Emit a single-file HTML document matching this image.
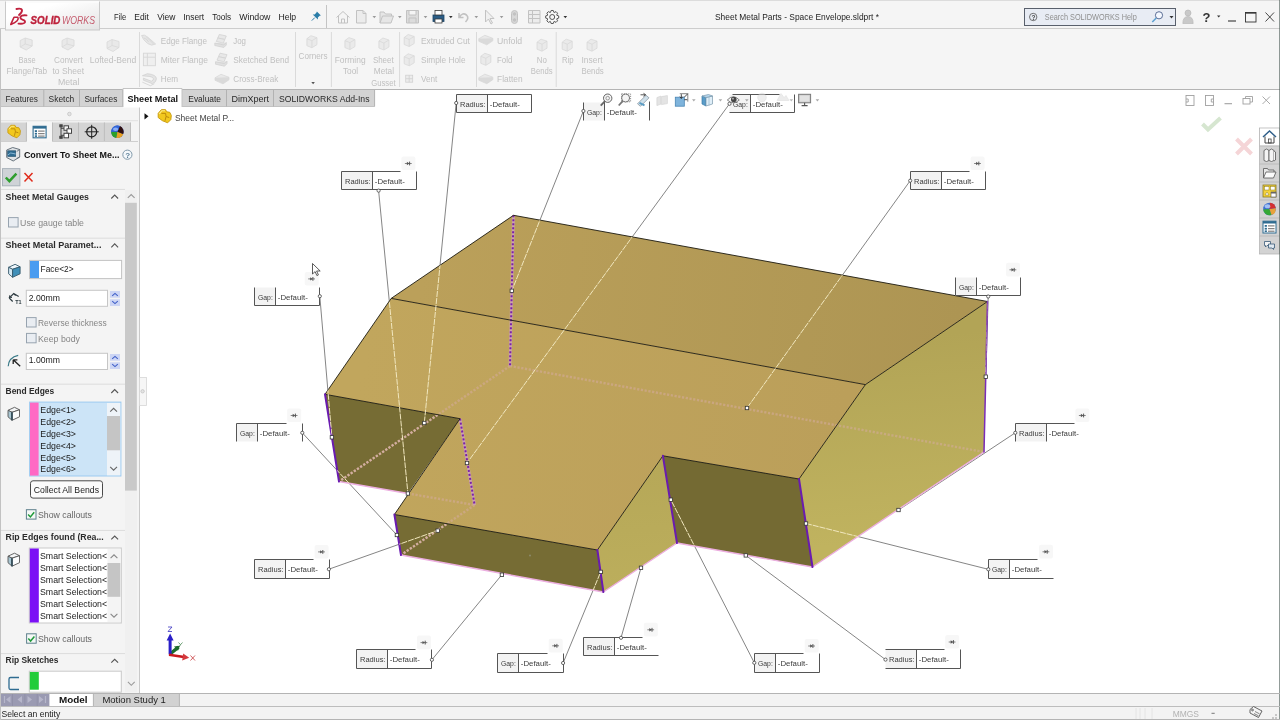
<!DOCTYPE html>
<html><head><meta charset="utf-8"><title>SOLIDWORKS</title>
<style>
*{box-sizing:border-box;margin:0;padding:0}
html,body{width:1280px;height:720px;overflow:hidden;background:#fff;font-family:"Liberation Sans",sans-serif;font-size:9px;color:#222}
.abs{position:absolute}
#titlebar{position:absolute;left:0;top:0;width:1280px;height:29px;background:#f5f5f5;border-top:1px solid #dcdcdc;border-bottom:1px solid #cdcdcd}
#ribbon{position:absolute;left:0;top:29px;width:1280px;height:61px;background:#f5f5f5}
#tabs{position:absolute;left:0;top:90px;width:376px;height:16px}
.tab{position:absolute;top:0;height:16px;background:#d2d2d2;border:1px solid #b9b9b9;border-bottom:none;font-size:9px;line-height:15px;text-align:center;color:#222;white-space:nowrap}
.tab.on{background:#fff;font-weight:bold;border-color:#c8c8c8;height:17px}
#left{position:absolute;left:0;top:106px;width:139.500px;height:587px;background:#f4f4f4;border-right:1px solid #c9c9c9;border-left:1px solid #d8d8d8}
#view{position:absolute;left:139px;top:90px;width:1141px;height:603px;background:#fff}
#right{display:none}
#btabs{position:absolute;left:0;top:693px;width:1280px;height:14px;background:#f3f3f3}
#status{position:absolute;left:0;top:706px;width:1280px;height:14px;background:#f3f3f3}
.t{position:absolute;white-space:nowrap;line-height:1}
.g{color:#b4b4b4}
svg{position:absolute;left:0;top:0;overflow:visible;will-change:transform}
</style></head><body>
<div id="titlebar"></div>
<div id="ribbon"></div>
<div id="view"></div>
<div id="left"></div>
<div id="right"></div>
<div id="tabs"></div>
<div id="btabs"></div>
<div id="status"></div>
<!--MODEL-->
<svg width="1280" height="720" viewBox="0 0 1280 720" id="model">
<defs>
<linearGradient id="gt" gradientUnits="userSpaceOnUse" x1="420" y1="280" x2="960" y2="330"><stop offset="0" stop-color="#bba05a"/><stop offset="1" stop-color="#ad9553"/></linearGradient>
<linearGradient id="gf" gradientUnits="userSpaceOnUse" x1="360" y1="380" x2="840" y2="440"><stop offset="0" stop-color="#c1a65d"/><stop offset="1" stop-color="#bb9f5a"/></linearGradient>
<linearGradient id="gr" gradientUnits="userSpaceOnUse" x1="880" y1="340" x2="900" y2="540"><stop offset="0" stop-color="#b2a456"/><stop offset="1" stop-color="#c0b35f"/></linearGradient>
<linearGradient id="gs" gradientUnits="userSpaceOnUse" x1="630" y1="470" x2="640" y2="590"><stop offset="0" stop-color="#b6a858"/><stop offset="1" stop-color="#bcae5c"/></linearGradient>
<clipPath id="msil"><polygon points="513.5,215.3 987.5,301.5 984.0,452.0 812.5,567.0 677.0,543.0 603.4,592.0 401.0,555.0 394.4,514.5 408.0,493.5 339.0,481.5 325.0,394.3 391.2,298.4"/></clipPath>
</defs>
<g stroke="#666" stroke-width="0.8" fill="none">
<line x1="456.2" y1="103.0" x2="424.3" y2="423.0"/>
<line x1="583.4" y1="111.0" x2="511.8" y2="290.8"/>
<line x1="729.5" y1="103.8" x2="467.0" y2="463.0"/>
<line x1="378.6" y1="190.6" x2="407.9" y2="493.5"/>
<line x1="910.2" y1="180.7" x2="747.0" y2="408.0"/>
<line x1="319.8" y1="296.2" x2="331.9" y2="437.3"/>
<line x1="988.2" y1="296.5" x2="985.8" y2="376.7"/>
<line x1="302.3" y1="432.8" x2="396.9" y2="535.0"/>
<line x1="1015.3" y1="432.8" x2="898.5" y2="510.0"/>
<line x1="328.9" y1="569.2" x2="437.7" y2="530.6"/>
<line x1="988.3" y1="569.3" x2="806.0" y2="523.5"/>
<line x1="431.9" y1="659.8" x2="501.9" y2="574.7"/>
<line x1="563.1" y1="663.0" x2="600.7" y2="571.9"/>
<line x1="621.0" y1="637.8" x2="641.0" y2="567.8"/>
<line x1="754.3" y1="662.8" x2="670.8" y2="499.7"/>
<line x1="885.5" y1="659.6" x2="745.8" y2="555.4"/>
</g>
<polygon points="513.5,215.3 987.5,301.5 865.4,384.6 391.2,298.4" fill="url(#gt)"/>
<polygon points="391.2,298.4 865.4,384.6 799.0,479.0 662.9,455.8 597.4,550.0 394.4,514.5 460.0,418.7 325.0,394.3" fill="url(#gf)"/>
<polygon points="799.0,479.0 865.4,384.6 987.5,301.5 984.0,452.0 812.5,567.0" fill="url(#gr)"/>
<polygon points="597.4,550.0 662.9,455.8 677.0,543.0 603.4,592.0" fill="url(#gs)"/>
<polygon points="325.0,394.3 460.0,418.7 408.0,493.5 339.0,481.5" fill="#766c34"/>
<polygon points="394.4,514.5 597.4,550.0 603.4,592.0 401.0,555.0" fill="#766c34"/>
<polygon points="662.9,455.8 799.0,479.0 812.5,567.0 677.0,543.0" fill="#746a33"/>
<clipPath id="dk"><polygon points="325.0,394.3 460.0,418.7 408.0,493.5 339.0,481.5"/><polygon points="394.4,514.5 597.4,550.0 603.4,592.0 401.0,555.0"/><polygon points="662.9,455.8 799.0,479.0 812.5,567.0 677.0,543.0"/></clipPath>
<g stroke="#d6ab9f" stroke-width="2.4" stroke-dasharray="2.2 1.6" fill="none" opacity="0.55">
<line x1="510.0" y1="366.0" x2="984.0" y2="452.0" />
<line x1="510.0" y1="366.0" x2="339.0" y2="481.5" />
<line x1="408.0" y1="493.5" x2="474.6" y2="505.0" />
<line x1="474.6" y1="505.0" x2="401.0" y2="555.0" />
</g>
<g stroke="#d8b2a6" stroke-width="2.2" stroke-dasharray="2.2 1.6" fill="none" opacity="0.9" clip-path="url(#dk)">
<line x1="510.0" y1="366.0" x2="984.0" y2="452.0" />
<line x1="510.0" y1="366.0" x2="339.0" y2="481.5" />
<line x1="408.0" y1="493.5" x2="474.6" y2="505.0" />
<line x1="474.6" y1="505.0" x2="401.0" y2="555.0" />
</g>
<g stroke="#cfa2b6" stroke-width="2.8" fill="none" opacity="0.9">
<line x1="513.5" y1="215.3" x2="510.0" y2="366.0" />
<line x1="460.0" y1="418.7" x2="474.6" y2="505.0" />
</g>
<g stroke="#7a22a8" stroke-width="2" stroke-dasharray="2 2" fill="none">
<line x1="513.5" y1="215.3" x2="510.0" y2="366.0" />
<line x1="460.0" y1="418.7" x2="474.6" y2="505.0" />
</g>
<g stroke="#ecaee0" stroke-width="1.4" fill="none" stroke-linecap="round">
<line x1="339.0" y1="481.5" x2="408.0" y2="493.5" />
<line x1="401.0" y1="555.0" x2="603.4" y2="592.0" />
<line x1="603.4" y1="592.0" x2="677.0" y2="543.0" />
<line x1="677.0" y1="543.0" x2="812.5" y2="567.0" />
<line x1="812.5" y1="567.0" x2="984.0" y2="452.0" />
</g>
<g stroke="#1c1a10" stroke-width="0.9" fill="none">
<line x1="513.5" y1="215.3" x2="987.5" y2="301.5" />
<line x1="987.5" y1="301.5" x2="865.4" y2="384.6" />
<line x1="865.4" y1="384.6" x2="391.2" y2="298.4" />
<line x1="391.2" y1="298.4" x2="513.5" y2="215.3" />
<line x1="391.2" y1="298.4" x2="325.0" y2="394.3" />
<line x1="325.0" y1="394.3" x2="460.0" y2="418.7" />
<line x1="460.0" y1="418.7" x2="394.4" y2="514.5" />
<line x1="394.4" y1="514.5" x2="597.4" y2="550.0" />
<line x1="597.4" y1="550.0" x2="662.9" y2="455.8" />
<line x1="662.9" y1="455.8" x2="799.0" y2="479.0" />
<line x1="799.0" y1="479.0" x2="865.4" y2="384.6" />
</g>
<g stroke="#6a1bb0" stroke-width="2" fill="none" stroke-linecap="round">
<line x1="325.0" y1="394.3" x2="339.0" y2="481.5" />
<line x1="394.4" y1="514.5" x2="401.0" y2="555.0" />
<line x1="597.4" y1="550.0" x2="603.4" y2="592.0" />
<line x1="662.9" y1="455.8" x2="677.0" y2="543.0" />
<line x1="799.0" y1="479.0" x2="812.5" y2="567.0" />
<line x1="987.5" y1="301.5" x2="984.0" y2="452.0" stroke-width="1.5" stroke="#7a2cb8"/>
</g>
<g stroke="#f1e7bf" stroke-width="1" fill="none" clip-path="url(#msil)" stroke-dasharray="6 1">
<line x1="456.2" y1="103.0" x2="424.3" y2="423.0"/>
<line x1="583.4" y1="111.0" x2="511.8" y2="290.8"/>
<line x1="729.5" y1="103.8" x2="467.0" y2="463.0"/>
<line x1="378.6" y1="190.6" x2="407.9" y2="493.5"/>
<line x1="910.2" y1="180.7" x2="747.0" y2="408.0"/>
<line x1="319.8" y1="296.2" x2="331.9" y2="437.3"/>
<line x1="988.2" y1="296.5" x2="985.8" y2="376.7"/>
<line x1="302.3" y1="432.8" x2="396.9" y2="535.0"/>
<line x1="1015.3" y1="432.8" x2="898.5" y2="510.0"/>
<line x1="328.9" y1="569.2" x2="437.7" y2="530.6"/>
<line x1="988.3" y1="569.3" x2="806.0" y2="523.5"/>
<line x1="431.9" y1="659.8" x2="501.9" y2="574.7"/>
<line x1="563.1" y1="663.0" x2="600.7" y2="571.9"/>
<line x1="621.0" y1="637.8" x2="641.0" y2="567.8"/>
<line x1="754.3" y1="662.8" x2="670.8" y2="499.7"/>
<line x1="885.5" y1="659.6" x2="745.8" y2="555.4"/>
</g>
<g fill="#fff" stroke="#333" stroke-width="0.8">
<rect x="422.6" y="421.3" width="3.4" height="3.4"/>
<rect x="510.1" y="289.1" width="3.4" height="3.4"/>
<rect x="465.3" y="461.3" width="3.4" height="3.4"/>
<rect x="406.2" y="491.8" width="3.4" height="3.4"/>
<rect x="745.3" y="406.3" width="3.4" height="3.4"/>
<rect x="330.2" y="435.6" width="3.4" height="3.4"/>
<rect x="984.1" y="375.0" width="3.4" height="3.4"/>
<rect x="395.2" y="533.3" width="3.4" height="3.4"/>
<rect x="896.8" y="508.3" width="3.4" height="3.4"/>
<rect x="436.0" y="528.9" width="3.4" height="3.4"/>
<rect x="804.3" y="521.8" width="3.4" height="3.4"/>
<rect x="500.2" y="573.0" width="3.4" height="3.4"/>
<rect x="599.0" y="570.2" width="3.4" height="3.4"/>
<rect x="639.3" y="566.1" width="3.4" height="3.4"/>
<rect x="669.1" y="498.0" width="3.4" height="3.4"/>
<rect x="744.1" y="553.7" width="3.4" height="3.4"/>
</g>
<circle cx="530" cy="555.5" r="1" fill="#8c8a6a"/>
</svg>
<!--/MODEL-->
<!--CALLOUTS-->
<svg width="1280" height="720" viewBox="0 0 1280 720" id="callouts" font-family="Liberation Sans, sans-serif" font-size="8">
<rect x="456.5" y="94.5" width="75.0" height="18.0" fill="#fff"/>
<rect x="456.5" y="94.5" width="31.0" height="18.0" fill="#f3f3f3"/>
<path d="M456.5 94.5V112.5M456.5 94.5H531.5M531.5 94.5V112.5M456.5 112.5H531.5M487.5 94.5V112.5" stroke="#555" stroke-width="1" fill="none"/>
<text x="460.0" y="107.0" fill="#3a3a3a" textLength="25.5" lengthAdjust="spacingAndGlyphs">Radius:</text>
<text x="489.8" y="107.0" fill="#3a3a3a" textLength="30" lengthAdjust="spacingAndGlyphs">-Default-</text>
<circle cx="456.2" cy="103.0" r="1.6" fill="#fff" stroke="#444" stroke-width="0.8"/>
<rect x="583.5" y="102.5" width="66.0" height="18.0" fill="#fff"/>
<rect x="583.5" y="102.5" width="21.0" height="18.0" fill="#f3f3f3"/>
<path d="M583.5 102.5V120.5M649.5 101.5V120.5M604.5 95.5V120.5" stroke="#555" stroke-width="1" fill="none"/>
<text x="587.0" y="115.0" fill="#3a3a3a" textLength="14.8" lengthAdjust="spacingAndGlyphs">Gap:</text>
<text x="606.8" y="115.0" fill="#3a3a3a" textLength="30" lengthAdjust="spacingAndGlyphs">-Default-</text>
<circle cx="583.4" cy="111.0" r="1.6" fill="#fff" stroke="#444" stroke-width="0.8"/>
<rect x="729.5" y="94.5" width="65.0" height="18.0" fill="#fff"/>
<rect x="729.5" y="94.5" width="21.0" height="18.0" fill="#f3f3f3"/>
<path d="M732.5 94.5H779.5M794.5 94.5V112.5M729.5 112.5H794.5M750.5 94.5V112.5" stroke="#555" stroke-width="1" fill="none"/>
<text x="733.0" y="107.0" fill="#3a3a3a" textLength="14.8" lengthAdjust="spacingAndGlyphs">Gap:</text>
<text x="752.8" y="107.0" fill="#3a3a3a" textLength="30" lengthAdjust="spacingAndGlyphs">-Default-</text>
<circle cx="729.5" cy="103.8" r="1.6" fill="#fff" stroke="#444" stroke-width="0.8"/>
<rect x="341.5" y="171.5" width="75.0" height="18.0" fill="#fff"/>
<rect x="341.5" y="171.5" width="31.0" height="18.0" fill="#f3f3f3"/>
<path d="M341.5 171.5V189.5M341.5 171.5H400.5M416.5 171.5V189.5M341.5 189.5H416.5M372.5 171.5V189.5" stroke="#555" stroke-width="1" fill="none"/>
<text x="345.0" y="184.0" fill="#3a3a3a" textLength="25.5" lengthAdjust="spacingAndGlyphs">Radius:</text>
<text x="374.8" y="184.0" fill="#3a3a3a" textLength="30" lengthAdjust="spacingAndGlyphs">-Default-</text>
<rect x="401.4" y="156.5" width="14" height="13.6" rx="2" fill="#f7f7f7"/>
<path d="M404.9 163.5h6.8" stroke="#666" stroke-width="0.8" fill="none"/><path d="M409.6 161.6v3.8" stroke="#555" stroke-width="1" fill="none"/><path d="M409.3 163.5l-2.4 -1.7v3.4z" fill="#555"/>
<circle cx="378.6" cy="190.6" r="1.6" fill="#fff" stroke="#444" stroke-width="0.8"/>
<rect x="910.5" y="171.5" width="75.0" height="18.0" fill="#fff"/>
<rect x="910.5" y="171.5" width="31.0" height="18.0" fill="#f3f3f3"/>
<path d="M910.5 171.5V189.5M910.5 171.5H969.5M985.5 171.5V189.5M910.5 189.5H985.5M941.5 171.5V189.5" stroke="#555" stroke-width="1" fill="none"/>
<text x="914.0" y="184.0" fill="#3a3a3a" textLength="25.5" lengthAdjust="spacingAndGlyphs">Radius:</text>
<text x="943.8" y="184.0" fill="#3a3a3a" textLength="30" lengthAdjust="spacingAndGlyphs">-Default-</text>
<rect x="970.6" y="156.5" width="14" height="13.6" rx="2" fill="#f7f7f7"/>
<path d="M974.1 163.5h6.8" stroke="#666" stroke-width="0.8" fill="none"/><path d="M978.8 161.6v3.8" stroke="#555" stroke-width="1" fill="none"/><path d="M978.5 163.5l-2.4 -1.7v3.4z" fill="#555"/>
<circle cx="910.2" cy="180.7" r="1.6" fill="#fff" stroke="#444" stroke-width="0.8"/>
<rect x="254.5" y="287.5" width="65.0" height="18.0" fill="#fff"/>
<rect x="254.5" y="287.5" width="21.0" height="18.0" fill="#f3f3f3"/>
<path d="M254.5 287.5V305.5M319.5 287.5V305.5M254.5 305.5H319.5M275.5 287.5V305.5" stroke="#555" stroke-width="1" fill="none"/>
<text x="258.0" y="300.0" fill="#3a3a3a" textLength="14.8" lengthAdjust="spacingAndGlyphs">Gap:</text>
<text x="277.8" y="300.0" fill="#3a3a3a" textLength="30" lengthAdjust="spacingAndGlyphs">-Default-</text>
<rect x="304.7" y="271.9" width="14" height="13.6" rx="2" fill="#f7f7f7"/>
<path d="M308.2 278.9h6.8" stroke="#666" stroke-width="0.8" fill="none"/><path d="M312.9 277.0v3.8" stroke="#555" stroke-width="1" fill="none"/><path d="M312.6 278.9l-2.4 -1.7v3.4z" fill="#555"/>
<circle cx="319.8" cy="296.2" r="1.6" fill="#fff" stroke="#444" stroke-width="0.8"/>
<rect x="955.5" y="277.5" width="65.0" height="18.0" fill="#fff"/>
<rect x="955.5" y="277.5" width="21.0" height="18.0" fill="#f3f3f3"/>
<path d="M955.5 277.5V295.5M1020.5 277.5V295.5M955.5 295.5H1020.5M976.5 277.5V295.5" stroke="#555" stroke-width="1" fill="none"/>
<text x="959.0" y="290.0" fill="#3a3a3a" textLength="14.8" lengthAdjust="spacingAndGlyphs">Gap:</text>
<text x="978.8" y="290.0" fill="#3a3a3a" textLength="30" lengthAdjust="spacingAndGlyphs">-Default-</text>
<rect x="1006.0" y="262.8" width="14" height="13.6" rx="2" fill="#f7f7f7"/>
<path d="M1009.5 269.8h6.8" stroke="#666" stroke-width="0.8" fill="none"/><path d="M1014.2 267.9v3.8" stroke="#555" stroke-width="1" fill="none"/><path d="M1013.9 269.8l-2.4 -1.7v3.4z" fill="#555"/>
<circle cx="988.2" cy="296.5" r="1.6" fill="#fff" stroke="#444" stroke-width="0.8"/>
<rect x="236.5" y="423.5" width="66.0" height="18.0" fill="#fff"/>
<rect x="236.5" y="423.5" width="21.0" height="18.0" fill="#f3f3f3"/>
<path d="M236.5 423.5V441.5M236.5 423.5H286.5M302.5 423.5V441.5M257.5 423.5V441.5" stroke="#555" stroke-width="1" fill="none"/>
<text x="240.0" y="436.0" fill="#3a3a3a" textLength="14.8" lengthAdjust="spacingAndGlyphs">Gap:</text>
<text x="259.8" y="436.0" fill="#3a3a3a" textLength="30" lengthAdjust="spacingAndGlyphs">-Default-</text>
<rect x="287.2" y="408.5" width="14" height="13.6" rx="2" fill="#f7f7f7"/>
<path d="M290.7 415.5h6.8" stroke="#666" stroke-width="0.8" fill="none"/><path d="M295.4 413.6v3.8" stroke="#555" stroke-width="1" fill="none"/><path d="M295.1 415.5l-2.4 -1.7v3.4z" fill="#555"/>
<circle cx="302.3" cy="432.8" r="1.6" fill="#fff" stroke="#444" stroke-width="0.8"/>
<rect x="1015.5" y="423.5" width="75.0" height="18.0" fill="#fff"/>
<rect x="1015.5" y="423.5" width="31.0" height="18.0" fill="#f3f3f3"/>
<path d="M1015.5 423.5V441.5M1015.5 423.5H1074.5M1046.5 423.5V441.5" stroke="#555" stroke-width="1" fill="none"/>
<text x="1019.0" y="436.0" fill="#3a3a3a" textLength="25.5" lengthAdjust="spacingAndGlyphs">Radius:</text>
<text x="1048.8" y="436.0" fill="#3a3a3a" textLength="30" lengthAdjust="spacingAndGlyphs">-Default-</text>
<rect x="1075.4" y="408.5" width="14" height="13.6" rx="2" fill="#f7f7f7"/>
<path d="M1078.9 415.5h6.8" stroke="#666" stroke-width="0.8" fill="none"/><path d="M1083.6 413.6v3.8" stroke="#555" stroke-width="1" fill="none"/><path d="M1083.3 415.5l-2.4 -1.7v3.4z" fill="#555"/>
<circle cx="1015.3" cy="432.8" r="1.6" fill="#fff" stroke="#444" stroke-width="0.8"/>
<rect x="254.5" y="559.5" width="75.0" height="19.0" fill="#fff"/>
<rect x="254.5" y="559.5" width="31.0" height="19.0" fill="#f3f3f3"/>
<path d="M254.5 559.5V578.5M254.5 559.5H313.5M329.5 559.5V578.5M254.5 578.5H329.5M285.5 559.5V578.5" stroke="#555" stroke-width="1" fill="none"/>
<text x="258.0" y="572.0" fill="#3a3a3a" textLength="25.5" lengthAdjust="spacingAndGlyphs">Radius:</text>
<text x="287.8" y="572.0" fill="#3a3a3a" textLength="30" lengthAdjust="spacingAndGlyphs">-Default-</text>
<rect x="314.6" y="544.9" width="14" height="13.6" rx="2" fill="#f7f7f7"/>
<path d="M318.1 551.9h6.8" stroke="#666" stroke-width="0.8" fill="none"/><path d="M322.8 550.0v3.8" stroke="#555" stroke-width="1" fill="none"/><path d="M322.5 551.9l-2.4 -1.7v3.4z" fill="#555"/>
<circle cx="328.9" cy="569.2" r="1.6" fill="#fff" stroke="#444" stroke-width="0.8"/>
<rect x="988.5" y="559.5" width="65.0" height="19.0" fill="#fff"/>
<rect x="988.5" y="559.5" width="21.0" height="19.0" fill="#f3f3f3"/>
<path d="M988.5 559.5V578.5M988.5 559.5H1037.5M988.5 578.5H1053.5M1009.5 559.5V578.5" stroke="#555" stroke-width="1" fill="none"/>
<text x="992.0" y="572.0" fill="#3a3a3a" textLength="14.8" lengthAdjust="spacingAndGlyphs">Gap:</text>
<text x="1011.8" y="572.0" fill="#3a3a3a" textLength="30" lengthAdjust="spacingAndGlyphs">-Default-</text>
<rect x="1039.0" y="544.8" width="14" height="13.6" rx="2" fill="#f7f7f7"/>
<path d="M1042.5 551.8h6.8" stroke="#666" stroke-width="0.8" fill="none"/><path d="M1047.2 549.9v3.8" stroke="#555" stroke-width="1" fill="none"/><path d="M1046.9 551.8l-2.4 -1.7v3.4z" fill="#555"/>
<circle cx="988.3" cy="569.3" r="1.6" fill="#fff" stroke="#444" stroke-width="0.8"/>
<rect x="356.5" y="649.5" width="75.0" height="19.0" fill="#fff"/>
<rect x="356.5" y="649.5" width="31.0" height="19.0" fill="#f3f3f3"/>
<path d="M356.5 649.5V668.5M356.5 649.5H415.5M431.5 649.5V668.5M356.5 668.5H431.5M387.5 649.5V668.5" stroke="#555" stroke-width="1" fill="none"/>
<text x="360.0" y="662.0" fill="#3a3a3a" textLength="25.5" lengthAdjust="spacingAndGlyphs">Radius:</text>
<text x="389.8" y="662.0" fill="#3a3a3a" textLength="30" lengthAdjust="spacingAndGlyphs">-Default-</text>
<rect x="417.0" y="635.6" width="14" height="13.6" rx="2" fill="#f7f7f7"/>
<path d="M420.5 642.6h6.8" stroke="#666" stroke-width="0.8" fill="none"/><path d="M425.2 640.7v3.8" stroke="#555" stroke-width="1" fill="none"/><path d="M424.9 642.6l-2.4 -1.7v3.4z" fill="#555"/>
<circle cx="431.9" cy="659.8" r="1.6" fill="#fff" stroke="#444" stroke-width="0.8"/>
<rect x="497.5" y="653.5" width="66.0" height="19.0" fill="#fff"/>
<rect x="497.5" y="653.5" width="21.0" height="19.0" fill="#f3f3f3"/>
<path d="M497.5 653.5V672.5M497.5 653.5H547.5M563.5 653.5V672.5M497.5 672.5H563.5M518.5 653.5V672.5" stroke="#555" stroke-width="1" fill="none"/>
<text x="501.0" y="666.0" fill="#3a3a3a" textLength="14.8" lengthAdjust="spacingAndGlyphs">Gap:</text>
<text x="520.8" y="666.0" fill="#3a3a3a" textLength="30" lengthAdjust="spacingAndGlyphs">-Default-</text>
<rect x="548.7" y="638.8" width="14" height="13.6" rx="2" fill="#f7f7f7"/>
<path d="M552.2 645.8h6.8" stroke="#666" stroke-width="0.8" fill="none"/><path d="M556.9 643.9v3.8" stroke="#555" stroke-width="1" fill="none"/><path d="M556.6 645.8l-2.4 -1.7v3.4z" fill="#555"/>
<circle cx="563.1" cy="663.0" r="1.6" fill="#fff" stroke="#444" stroke-width="0.8"/>
<rect x="583.5" y="637.5" width="75.0" height="18.0" fill="#fff"/>
<rect x="583.5" y="637.5" width="31.0" height="18.0" fill="#f3f3f3"/>
<path d="M583.5 637.5V655.5M583.5 637.5H642.5M583.5 655.5H658.5M614.5 637.5V655.5" stroke="#555" stroke-width="1" fill="none"/>
<text x="587.0" y="650.0" fill="#3a3a3a" textLength="25.5" lengthAdjust="spacingAndGlyphs">Radius:</text>
<text x="616.8" y="650.0" fill="#3a3a3a" textLength="30" lengthAdjust="spacingAndGlyphs">-Default-</text>
<rect x="643.8" y="622.8" width="14" height="13.6" rx="2" fill="#f7f7f7"/>
<path d="M647.3 629.8h6.8" stroke="#666" stroke-width="0.8" fill="none"/><path d="M652.0 627.9v3.8" stroke="#555" stroke-width="1" fill="none"/><path d="M651.7 629.8l-2.4 -1.7v3.4z" fill="#555"/>
<circle cx="621.0" cy="637.8" r="1.6" fill="#fff" stroke="#444" stroke-width="0.8"/>
<rect x="754.5" y="653.5" width="65.0" height="19.0" fill="#fff"/>
<rect x="754.5" y="653.5" width="21.0" height="19.0" fill="#f3f3f3"/>
<path d="M754.5 653.5V672.5M754.5 653.5H803.5M819.5 653.5V672.5M754.5 672.5H819.5M775.5 653.5V672.5" stroke="#555" stroke-width="1" fill="none"/>
<text x="758.0" y="666.0" fill="#3a3a3a" textLength="14.8" lengthAdjust="spacingAndGlyphs">Gap:</text>
<text x="777.8" y="666.0" fill="#3a3a3a" textLength="30" lengthAdjust="spacingAndGlyphs">-Default-</text>
<rect x="804.7" y="639.0" width="14" height="13.6" rx="2" fill="#f7f7f7"/>
<path d="M808.2 646.0h6.8" stroke="#666" stroke-width="0.8" fill="none"/><path d="M812.9 644.1v3.8" stroke="#555" stroke-width="1" fill="none"/><path d="M812.6 646.0l-2.4 -1.7v3.4z" fill="#555"/>
<circle cx="754.3" cy="662.8" r="1.6" fill="#fff" stroke="#444" stroke-width="0.8"/>
<rect x="885.5" y="649.5" width="75.0" height="19.0" fill="#fff"/>
<rect x="885.5" y="649.5" width="31.0" height="19.0" fill="#f3f3f3"/>
<path d="M885.5 649.5H944.5M960.5 649.5V668.5M885.5 668.5H960.5M916.5 649.5V668.5" stroke="#555" stroke-width="1" fill="none"/>
<text x="889.0" y="662.0" fill="#3a3a3a" textLength="25.5" lengthAdjust="spacingAndGlyphs">Radius:</text>
<text x="918.8" y="662.0" fill="#3a3a3a" textLength="30" lengthAdjust="spacingAndGlyphs">-Default-</text>
<rect x="945.2" y="635.0" width="14" height="13.6" rx="2" fill="#f7f7f7"/>
<path d="M948.7 642.0h6.8" stroke="#666" stroke-width="0.8" fill="none"/><path d="M953.4 640.1v3.8" stroke="#555" stroke-width="1" fill="none"/><path d="M953.1 642.0l-2.4 -1.7v3.4z" fill="#555"/>
<circle cx="885.5" cy="659.6" r="1.6" fill="#fff" stroke="#444" stroke-width="0.8"/>
</svg>
<!--/CALLOUTS-->
<!--TITLE-->
<svg width="1280" height="30" viewBox="0 0 1280 30" font-family="Liberation Sans, sans-serif">
<defs><linearGradient id="lg" x1="0" y1="0" x2="1" y2="1"><stop offset="0.3" stop-color="#fff"/><stop offset="1" stop-color="#e4e4e4"/></linearGradient></defs>
<!-- logo box -->
<rect x="5.5" y="2" width="94" height="28" fill="url(#lg)" stroke="#c9c9c9" stroke-width="1"/>
<rect x="6" y="1" width="93" height="2" fill="#fbfbfb"/>
<g fill="none" stroke="#c0223e" stroke-width="1.9" stroke-linecap="round" stroke-linejoin="round">
<path d="M16.5 9 q5 -1 5.5 1.2 q0.3 2 -3 4.8"/>
<path d="M14 17.2 l3.8 0 q2.2 3.6 -7 7.2 z" stroke-width="1.6"/>
<path d="M26.5 15.4 q-6 -0.6 -6.2 2.2 q0.2 1.6 2.6 2.2 q2.6 0.8 2 2.6 q-1 1.8 -6.4 1.2"/>
</g>
<text x="30.6" y="23.6" font-size="10" font-weight="bold" font-style="italic" fill="#be223c" stroke="#be223c" stroke-width="0.35" textLength="29.8" lengthAdjust="spacingAndGlyphs">SOLID</text>
<text x="62" y="23.6" font-size="10" font-style="italic" fill="#c55a6c" textLength="33" lengthAdjust="spacingAndGlyphs">WORKS</text>
<!-- menu -->
<g font-size="9" fill="#1e1e1e">
<text x="114" y="20.2" textLength="12.2" lengthAdjust="spacingAndGlyphs">File</text>
<text x="134.3" y="20.2" textLength="14.6" lengthAdjust="spacingAndGlyphs">Edit</text>
<text x="157.2" y="20.2" textLength="18.3" lengthAdjust="spacingAndGlyphs">View</text>
<text x="183.2" y="20.2" textLength="21" lengthAdjust="spacingAndGlyphs">Insert</text>
<text x="212.2" y="20.2" textLength="19" lengthAdjust="spacingAndGlyphs">Tools</text>
<text x="239.2" y="20.2" textLength="31.2" lengthAdjust="spacingAndGlyphs">Window</text>
<text x="278.4" y="20.2" textLength="17.8" lengthAdjust="spacingAndGlyphs">Help</text>
</g>
<!-- pin -->
<g transform="translate(316.4 16)"><path d="M0.5 -4.5 l4 4 l-1.2 0.3 l-1.8 1.8 l0 2 l-5.2 -5.2 l2 0 l1.8 -1.8 z" fill="#2a7da8"/><path d="M-1.6 1.6 l-3 3" stroke="#2a7da8" stroke-width="1"/></g>
<line x1="326.5" y1="5" x2="326.5" y2="28" stroke="#c4c4c4"/>
<!-- quick access icons (greyed) -->
<g fill="none" stroke="#c2c2c2" stroke-width="1">
<path d="M336.5 17.5 l6.5 -6 l6.5 6 M338.5 16 v7 h9 v-7 M341.5 23 v-4 h3 v4"/>
<path d="M356.5 10.5 h6.5 l3 3 v9.5 h-9.5 z M363 10.5 v3 h3" fill="#ececec"/>
<path d="M380 23 v-11 h4 l1.5 2 h6 v2 M380 23 l2.5 -7 h11 l-2.500 7 z" fill="#e6e6e6"/>
<path d="M406.500 10.500 h12 v12.500 h-12 z M409 10.500 v4.500 h7 v-4.500 M409 23 v-5 h7 v5" fill="#dcdcdc"/>
<path d="M459 13 v4.500 h4.500 M459.500 17 q3 -5 7 -2 q3 3 -1 7" stroke-width="1.600"/>
<path d="M485.500 10 v12 l3 -3 l2.500 5 l1.500 -1 l-2.500 -4.500 h4 z" fill="#f0f0f0"/>
<rect x="511.500" y="10.500" width="6" height="13" rx="3" fill="#d8d8d8"/><circle cx="514.500" cy="14" r="1.300" fill="#c2c2c2"/><circle cx="514.500" cy="20" r="1.300" fill="#c2c2c2"/>
<path d="M528.500 10.500 h11.500 v12.500 h-11.500 z M532.500 10.500 v12.500 M528.500 14.500 h11.500 M528.500 18.500 h11.500" fill="#ececec"/>
</g>
<!-- print (active) -->
<g><rect x="433" y="15" width="11" height="6.500" fill="#2b5d86" stroke="#1d4565" stroke-width="0.800"/><rect x="435" y="10.500" width="7" height="4.500" fill="#fff" stroke="#3a3a3a" stroke-width="0.800"/><rect x="435" y="19" width="7" height="4" fill="#fff" stroke="#3a3a3a" stroke-width="0.800"/></g>
<!-- gear -->
<g transform="translate(552.2 17)" fill="#f8f8f8" stroke="#454545" stroke-width="0.9" stroke-linejoin="round"><path d="M4.59 -1.72 L6.51 -1.08 L6.51 1.08 L4.59 1.72 L4.46 2.02 L5.37 3.84 L3.84 5.37 L2.02 4.46 L1.72 4.59 L1.08 6.51 L-1.08 6.51 L-1.72 4.59 L-2.02 4.46 L-3.84 5.37 L-5.37 3.84 L-4.46 2.02 L-4.59 1.72 L-6.51 1.08 L-6.51 -1.08 L-4.59 -1.72 L-4.46 -2.02 L-5.37 -3.84 L-3.84 -5.37 L-2.02 -4.46 L-1.72 -4.59 L-1.08 -6.51 L1.08 -6.51 L1.72 -4.59 L2.02 -4.46 L3.84 -5.37 L5.37 -3.84 L4.46 -2.02Z"/><circle r="2.5" fill="#f5f5f5"/></g>
<!-- dropdown arrows -->
<g fill="#9a9a9a"><path d="M372.500 16 h3.600 l-1.800 2.200z"/><path d="M398 16 h3.600 l-1.800 2.200z"/><path d="M423.700 16 h3.600 l-1.800 2.200z"/><path d="M474.500 16 h3.600 l-1.800 2.200z"/><path d="M499.800 16 h3.600 l-1.800 2.200z"/></g>
<g fill="#333"><path d="M449 16 h3.600 l-1.800 2.200z"/><path d="M563.500 16 h3.600 l-1.800 2.200z"/></g>
<!-- title -->
<text x="715" y="20.300" font-size="9" fill="#1e1e1e" textLength="164" lengthAdjust="spacingAndGlyphs">Sheet Metal Parts - Space Envelope.sldprt *</text>
<!-- search -->
<rect x="1024.500" y="8.500" width="151" height="17" fill="#e8ecf4" stroke="#59606c"/>
<circle cx="1033.200" cy="17" r="3.700" fill="none" stroke="#555" stroke-width="0.800"/><text x="1031.400" y="19.600" font-size="6.500" fill="#444" font-weight="bold">?</text>
<text x="1044.800" y="20.200" font-size="8.500" fill="#8f8f8f" textLength="92" lengthAdjust="spacingAndGlyphs">Search SOLIDWORKS Help</text>
<circle cx="1159" cy="15.300" r="3.600" fill="#f4f8ff" stroke="#4b5f8a" stroke-width="0.900"/><path d="M1156.300 18 l-4 4" stroke="#5aa0d0" stroke-width="1.500"/>
<path d="M1169.500 16 h4 l-2 2.500z" fill="#333"/>
<!-- user -->
<g fill="#c9c9c9" stroke="#b4b4b4" stroke-width="0.600"><circle cx="1188" cy="13" r="3"/><path d="M1182.800 23.500 q0 -7 5.200 -7 q5.200 0 5.200 7 z"/></g>
<text x="1202.500" y="21.800" font-size="13" font-weight="bold" fill="#333">?</text>
<path d="M1217 15.500 h3.400 l-1.700 2.100z" fill="#333"/>
<path d="M1228 21 h8" stroke="#333" stroke-width="1.100"/>
<rect x="1245.500" y="12.500" width="10.500" height="9.500" fill="none" stroke="#333" stroke-width="0.900"/><path d="M1245.500 13 h10.500" stroke="#333" stroke-width="1.300"/>
<path d="M1265.500 12.500 l8.500 9 M1274 12.500 l-8.500 9" stroke="#333" stroke-width="0.900"/>
</svg>

<!--/TITLE-->
<!--RIBBON-->
<svg width="1280" height="92" viewBox="0 0 1280 92" font-family="Liberation Sans, sans-serif" font-size="8.6" fill="#c0c0c0">
<text x="18.5" y="62.7" textLength="17.1" lengthAdjust="spacingAndGlyphs">Base</text>
<text x="6.5" y="73.7" textLength="40.7" lengthAdjust="spacingAndGlyphs">Flange/Tab</text>
<text x="54.0" y="62.7" textLength="28.7" lengthAdjust="spacingAndGlyphs">Convert</text>
<text x="52.5" y="73.7" textLength="31.5" lengthAdjust="spacingAndGlyphs">to Sheet</text>
<text x="57.9" y="85.0" textLength="21.5" lengthAdjust="spacingAndGlyphs">Metal</text>
<text x="89.7" y="62.7" textLength="46.5" lengthAdjust="spacingAndGlyphs">Lofted-Bend</text>
<text x="160.8" y="43.8" textLength="46.1" lengthAdjust="spacingAndGlyphs">Edge Flange</text>
<text x="160.8" y="62.8" textLength="47.2" lengthAdjust="spacingAndGlyphs">Miter Flange</text>
<text x="160.8" y="81.7" textLength="17.2" lengthAdjust="spacingAndGlyphs">Hem</text>
<text x="233.3" y="43.8" textLength="12.7" lengthAdjust="spacingAndGlyphs">Jog</text>
<text x="233.3" y="62.8" textLength="55.9" lengthAdjust="spacingAndGlyphs">Sketched Bend</text>
<text x="233.3" y="81.7" textLength="45.0" lengthAdjust="spacingAndGlyphs">Cross-Break</text>
<text x="298.6" y="58.6" textLength="28.9" lengthAdjust="spacingAndGlyphs">Corners</text>
<text x="334.7" y="62.8" textLength="30.9" lengthAdjust="spacingAndGlyphs">Forming</text>
<text x="342.9" y="74.0" textLength="15.2" lengthAdjust="spacingAndGlyphs">Tool</text>
<text x="372.9" y="62.8" textLength="20.8" lengthAdjust="spacingAndGlyphs">Sheet</text>
<text x="373.8" y="74.0" textLength="20.2" lengthAdjust="spacingAndGlyphs">Metal</text>
<text x="371.2" y="85.6" textLength="24.4" lengthAdjust="spacingAndGlyphs">Gusset</text>
<text x="420.9" y="43.8" textLength="49.0" lengthAdjust="spacingAndGlyphs">Extruded Cut</text>
<text x="420.9" y="62.8" textLength="44.6" lengthAdjust="spacingAndGlyphs">Simple Hole</text>
<text x="420.9" y="81.7" textLength="16.4" lengthAdjust="spacingAndGlyphs">Vent</text>
<text x="497.1" y="43.8" textLength="25.1" lengthAdjust="spacingAndGlyphs">Unfold</text>
<text x="497.1" y="62.8" textLength="15.2" lengthAdjust="spacingAndGlyphs">Fold</text>
<text x="497.1" y="81.7" textLength="25.5" lengthAdjust="spacingAndGlyphs">Flatten</text>
<text x="536.7" y="62.8" textLength="10.1" lengthAdjust="spacingAndGlyphs">No</text>
<text x="530.8" y="74.0" textLength="21.8" lengthAdjust="spacingAndGlyphs">Bends</text>
<text x="562.0" y="62.8" textLength="11.7" lengthAdjust="spacingAndGlyphs">Rip</text>
<text x="581.5" y="62.8" textLength="21.1" lengthAdjust="spacingAndGlyphs">Insert</text>
<text x="581.5" y="74.0" textLength="22.2" lengthAdjust="spacingAndGlyphs">Bends</text>
<line x1="139.5" y1="32" x2="139.5" y2="87" stroke="#dadada"/>
<line x1="295.5" y1="32" x2="295.5" y2="87" stroke="#dadada"/>
<line x1="331.4" y1="32" x2="331.4" y2="87" stroke="#dadada"/>
<line x1="399.6" y1="32" x2="399.6" y2="87" stroke="#dadada"/>
<line x1="476.5" y1="32" x2="476.5" y2="87" stroke="#dadada"/>
<line x1="556.2" y1="32" x2="556.2" y2="87" stroke="#dadada"/>
<g transform="translate(26.2 44.5)" fill="#e9e9e9" stroke="#d8d8d8" stroke-width="0.8"><path d="M-6 -4 l5 -2.500 l7 2 v6 l-6 4 l-6 -3 z"/><path d="M-1 -6.500 v6 l-5 3 M-1 -0.500 l7 2" fill="none"/></g>
<g transform="translate(68.0 44.5)" fill="#e9e9e9" stroke="#d8d8d8" stroke-width="0.8"><path d="M-6 -4 l5 -2.500 l7 2 v6 l-6 4 l-6 -3 z"/><path d="M-1 -6.500 v6 l-5 3 M-1 -0.500 l7 2" fill="none"/></g>
<g transform="translate(113.0 46.0)" fill="#e9e9e9" stroke="#d8d8d8" stroke-width="0.8"><path d="M-6 -4 l5 -2.500 l7 2 v6 l-6 4 l-6 -3 z"/><path d="M-1 -6.500 v6 l-5 3 M-1 -0.500 l7 2" fill="none"/></g>
<g transform="translate(148.6 41.0)" fill="#e6e6e6" stroke="#d4d4d4" stroke-width="0.8"><path d="M-7 -5.500 q2.500 -1.500 6 1.500 l8 7 q-4 2.500 -8 -0.500 q-5 -4 -6 -8z"/><path d="M-5 -3 q3 0 5 4 M-2 -4 l7 7" fill="none"/></g>
<g transform="translate(149.4 59.7)" fill="#efefef" stroke="#d6d6d6" stroke-width="0.9"><rect x="-6" y="-6.500" width="12" height="12.500"/><path d="M-6 -2.500 h12 M-2 -6.500 v12.500" fill="none"/></g>
<g transform="translate(149.4 79.2)" fill="#e4e4e4" stroke="#d0d0d0" stroke-width="0.8"><path d="M-7 -3.500 l5 -2 q9 1 9 5 q0 3.500 -4 5 l-9 -3.500 l0 -2 l8 3 q2.500 -1 2 -2.500 q-1 -2.500 -7 -2.500z"/><path d="M-7 3 l8 3.500 l4 -2" fill="none"/></g>
<g transform="translate(221.3 41.0)" fill="#e8e8e8" stroke="#d2d2d2" stroke-width="0.8"><path d="M-2 -6.500 l7 1.500 l-1.500 3.500 l-7 -1.500z"/><path d="M-3.500 -3 l7 1.500 l-1.500 3.500 l-7 -1.500z"/><path d="M-6.500 2 l9 2 l2.500 -2.500 M-6.500 2 l0 2.500 l9 2 l2.500 -2.500 v-2.500" fill="#e0e0e0"/></g>
<g transform="translate(222.0 59.7)" fill="#e8e8e8" stroke="#d2d2d2" stroke-width="0.8"><path d="M-2 -6.500 l7 1.500 l-1.500 3.500 l-7 -1.500z"/><path d="M-3.500 -3 l7 1.500 l-1.500 3.500 l-7 -1.500z"/><path d="M-6.500 2 l9 2 l2.500 -2.500 M-6.500 2 l0 2.500 l9 2 l2.500 -2.500 v-2.500" fill="#e0e0e0"/></g>
<g transform="translate(222.0 78.8)" fill="#e9e9e9" stroke="#d8d8d8" stroke-width="0.8"><path d="M-7 -1 l6 -3.500 l8 3 l-6 4 z"/><path d="M-7 -1 v2.500 l8 3.500 l6 -4 v-2.500" fill="#dadada"/></g>
<g transform="translate(311.9 41.7)" fill="#eaeaea" stroke="#d8d8d8" stroke-width="0.8"><path d="M-5 -3 l4 -3 l6 2 v7 l-5 3 l-5 -2 z"/><path d="M-5 -3 l5 2 l5 -3 M0 -1 v7" fill="none"/></g>
<g transform="translate(349.9 43.6)" fill="#eaeaea" stroke="#d8d8d8" stroke-width="0.8"><path d="M-5 -3 l4 -3 l6 2 v7 l-5 3 l-5 -2 z"/><path d="M-5 -3 l5 2 l5 -3 M0 -1 v7" fill="none"/></g>
<g transform="translate(383.9 44.0)" fill="#eaeaea" stroke="#d8d8d8" stroke-width="0.8"><path d="M-5 -3 l4 -3 l6 2 v7 l-5 3 l-5 -2 z"/><path d="M-5 -3 l5 2 l5 -3 M0 -1 v7" fill="none"/></g>
<g transform="translate(409.2 40.5)" fill="#eaeaea" stroke="#d8d8d8" stroke-width="0.8"><path d="M-5 -3 l4 -3 l6 2 v7 l-5 3 l-5 -2 z"/><path d="M-5 -3 l5 2 l5 -3 M0 -1 v7" fill="none"/></g>
<g transform="translate(409.2 59.8)" fill="#eaeaea" stroke="#d8d8d8" stroke-width="0.8"><path d="M-5 -3 l4 -3 l6 2 v7 l-5 3 l-5 -2 z"/><path d="M-5 -3 l5 2 l5 -3 M0 -1 v7" fill="none"/></g>
<g transform="translate(409.2 78.7)" fill="#ececec" stroke="#d0d0d0" stroke-width="0.8"><rect x="-3.500" y="-3.500" width="7" height="7"/><path d="M0 -3.500 v7 M-3.500 0 h7" fill="none"/></g>
<g transform="translate(485.8 39.8)" fill="#e9e9e9" stroke="#d8d8d8" stroke-width="0.8"><path d="M-7 -1 l6 -3.500 l8 3 l-6 4 z"/><path d="M-7 -1 v2.500 l8 3.500 l6 -4 v-2.500" fill="#dadada"/></g>
<g transform="translate(485.8 59.3)" fill="#eaeaea" stroke="#d8d8d8" stroke-width="0.8"><path d="M-5 -3 l4 -3 l6 2 v7 l-5 3 l-5 -2 z"/><path d="M-5 -3 l5 2 l5 -3 M0 -1 v7" fill="none"/></g>
<g transform="translate(485.8 78.7)" fill="#e9e9e9" stroke="#d8d8d8" stroke-width="0.8"><path d="M-7 -1 l6 -3.500 l8 3 l-6 4 z"/><path d="M-7 -1 v2.500 l8 3.500 l6 -4 v-2.500" fill="#dadada"/></g>
<g transform="translate(542.0 45.2)" fill="#eaeaea" stroke="#d8d8d8" stroke-width="0.8"><path d="M-5 -3 l4 -3 l6 2 v7 l-5 3 l-5 -2 z"/><path d="M-5 -3 l5 2 l5 -3 M0 -1 v7" fill="none"/></g>
<g transform="translate(567.2 45.2)" fill="#eaeaea" stroke="#d8d8d8" stroke-width="0.8"><path d="M-5 -3 l4 -3 l6 2 v7 l-5 3 l-5 -2 z"/><path d="M-5 -3 l5 2 l5 -3 M0 -1 v7" fill="none"/></g>
<g transform="translate(592.0 45.2)" fill="#eaeaea" stroke="#d8d8d8" stroke-width="0.8"><path d="M-5 -3 l4 -3 l6 2 v7 l-5 3 l-5 -2 z"/><path d="M-5 -3 l5 2 l5 -3 M0 -1 v7" fill="none"/></g>
<path d="M311.300 82 h3.600 l-1.800 2.200z" fill="#555"/>
</svg>
<!--/RIBBON-->
<!--TABS-->
<svg width="400" height="110" viewBox="0 0 400 110" font-family="Liberation Sans, sans-serif" font-size="9">
<rect x="0" y="89.500" width="374.600" height="17" fill="#d3d3d3"/>
<path d="M0 89.500 H1280" stroke="#b4b4b4" fill="none"/>
<path d="M0 106.500 H374.600" stroke="#c2c2c2" fill="none"/>
<line x1="43.8" y1="90" x2="43.8" y2="106.500" stroke="#b2b2b2"/>
<text x="5.5" y="101.600" textLength="32.5" lengthAdjust="spacingAndGlyphs" fill="#2a2a2a">Features</text>
<line x1="79.5" y1="90" x2="79.5" y2="106.500" stroke="#b2b2b2"/>
<text x="48.6" y="101.600" textLength="25.7" lengthAdjust="spacingAndGlyphs" fill="#2a2a2a">Sketch</text>
<line x1="122.5" y1="90" x2="122.5" y2="106.500" stroke="#b2b2b2"/>
<text x="84.5" y="101.600" textLength="32.8" lengthAdjust="spacingAndGlyphs" fill="#2a2a2a">Surfaces</text>
<rect x="123.0" y="88.500" width="59.0" height="19" fill="#fff"/>
<path d="M123.0 107 V88.500 H182.0 V107" stroke="#c4c4c4" fill="none"/>
<text x="127.5" y="101.600" textLength="50.5" lengthAdjust="spacingAndGlyphs" fill="#111" font-weight="bold">Sheet Metal</text>
<line x1="226.5" y1="90" x2="226.5" y2="106.500" stroke="#b2b2b2"/>
<text x="188.3" y="101.600" textLength="32.7" lengthAdjust="spacingAndGlyphs" fill="#2a2a2a">Evaluate</text>
<line x1="273.5" y1="90" x2="273.5" y2="106.500" stroke="#b2b2b2"/>
<text x="231.5" y="101.600" textLength="37.5" lengthAdjust="spacingAndGlyphs" fill="#2a2a2a">DimXpert</text>
<line x1="374.6" y1="90" x2="374.6" y2="106.500" stroke="#b2b2b2"/>
<text x="279.0" y="101.600" textLength="90.5" lengthAdjust="spacingAndGlyphs" fill="#2a2a2a">SOLIDWORKS Add-Ins</text>
</svg>
<!--/TABS-->
<!--LEFT-->
<svg width="150" height="720" viewBox="0 0 150 720" font-family="Liberation Sans, sans-serif" font-size="8.800">
<circle cx="69.400" cy="114" r="1.800" fill="#e4e4e4" stroke="#b8b8b8" stroke-width="0.600"/>
<line x1="1" y1="120.700" x2="138" y2="120.700" stroke="#e0e0e0"/>
<rect x="0" y="122.500" width="130.500" height="19" fill="#d4d4d4"/>
<rect x="26.800" y="122" width="25.400" height="20" fill="#f6f6f6"/>
<line x1="26.4" y1="122.500" x2="26.4" y2="141.500" stroke="#bdbdbd"/>
<line x1="52.5" y1="122.500" x2="52.5" y2="141.500" stroke="#bdbdbd"/>
<line x1="78.5" y1="122.500" x2="78.5" y2="141.500" stroke="#bdbdbd"/>
<line x1="104.4" y1="122.500" x2="104.4" y2="141.500" stroke="#bdbdbd"/>
<line x1="130.5" y1="122.500" x2="130.5" y2="141.500" stroke="#bdbdbd"/>
<path d="M0 141.500 H26.400 M52.500 141.500 H138" stroke="#cfcfcf" fill="none"/>
<g transform="translate(13.9 131.8) scale(1.00)"><path d="M-6 -3 l3 -3.500 h4 l1 2 l3 0.500 l1.500 3 l-0.500 4 l-3 3 l-5 -2 l-4 -3 z" fill="#f2c81e" stroke="#c79a10" stroke-width="0.900"/><path d="M-3 -3 l4 0 l0.500 3 l3 1 M1.500 0 l-1 4" fill="none" stroke="#b8860b" stroke-width="0.900"/><path d="M-5 -2.500 l2.500 -3 h3" stroke="#fbe88a" stroke-width="1" fill="none"/></g>
<g transform="translate(39.6 131.8)"><rect x="-6.500" y="-5.500" width="13" height="11.500" fill="#fff" stroke="#2f6c91" stroke-width="1.100"/><rect x="-6.500" y="-5.500" width="13" height="2.300" fill="#2f6c91"/><g fill="#2f6c91"><rect x="-4.800" y="-1.600" width="2.200" height="1.800"/><rect x="-4.800" y="1" width="2.200" height="1.800"/><rect x="-4.800" y="3.500" width="2.200" height="1.600"/></g><path d="M-1.500 -0.700 h6.500 M-1.500 1.900 h6.500 M-1.500 4.300 h6.500" stroke="#555" stroke-width="0.900"/></g>
<g transform="translate(66 131.8)" fill="none" stroke="#444" stroke-width="1"><path d="M-5 -6 v11 M-5 -3.500 h3 M-5 3.500 h3"/><rect x="-2" y="-6" width="4.500" height="4.500" fill="#f4f4f4"/><rect x="1" y="-3" width="4.500" height="4.500" fill="#fff"/><rect x="-2" y="1.500" width="4.500" height="4.500" fill="#fff"/><rect x="-6.200" y="-7" width="2.400" height="2" fill="#444"/><rect x="-6.200" y="4.500" width="2.400" height="2" fill="#444"/></g>
<g transform="translate(91.7 131.8)" fill="none" stroke="#222" stroke-width="1.200"><circle r="5"/><path d="M0 -7 v14 M-7 0 h14" stroke-width="1"/></g>
<g transform="translate(117.4 131.8)"><circle r="6.200" fill="#2a4fc0"/><path d="M0 0 L-6.200 0 A6.200 6.200 0 0 0 -1 6.100 z" fill="#2aa02a"/><path d="M0 0 L-1 6.100 A6.200 6.200 0 0 0 5.800 2.200 z" fill="#e8a020"/><path d="M0 0 L5.800 2.200 A6.200 6.200 0 0 0 2.500 -5.700 z" fill="#301010"/><path d="M0 0 L2.500 -5.700 A6.200 6.200 0 0 0 -6.200 0 z" fill="#3366d8"/><ellipse cx="-1.800" cy="-2.600" rx="2.600" ry="1.800" fill="#9fc0ff" opacity="0.800"/></g>
<g transform="translate(13.2 154)"><path d="M-6.500 -4 l6 -2.500 l7 2 v7.500 l-6.500 4 l-6.500 -3.500 z" fill="#dfe3e6" stroke="#5a6670" stroke-width="0.900"/><rect x="-5.500" y="-3.200" width="8" height="5.600" fill="#2f6c91" stroke="#1f4c69" stroke-width="0.600"/><path d="M-5.500 1 l3 -2 l5 1" stroke="#9cc8e6" stroke-width="0.800" fill="none"/><path d="M3.500 -2.500 l3 -2 M3.500 4.500 l3 -1.500" stroke="#5a6670" stroke-width="0.800"/></g>
<text x="23.9" y="157.6" textLength="95.5" lengthAdjust="spacingAndGlyphs" fill="#111" font-weight="bold" font-size="9">Convert To Sheet Me...</text>
<circle cx="127.400" cy="154.700" r="4.600" fill="#f4f8fb" stroke="#7f97a8" stroke-width="1"/><text x="125.200" y="157.700" font-size="8" font-weight="bold" fill="#5b7f98">?</text>
<rect x="2.500" y="168.600" width="17.400" height="17.200" fill="#cfd3d7" stroke="#a9b2ba"/>
<path d="M5.800 177.500 l3.600 3.700 l7 -7.600" stroke="#2f9e2f" stroke-width="2.500" fill="none"/>
<path d="M24.500 173 l8 8.500 M32.500 173 l-8 8.500" stroke="#e02a1a" stroke-width="1.500"/>
<rect x="125" y="190" width="12" height="502" fill="#f0f0f0"/>
<rect x="125" y="202.800" width="11.800" height="287.800" fill="#c9c9c9"/>
<path d="M127.8 197.9 l3.400 -3.4 l3.400 3.4" stroke="#9a9a9a" stroke-width="1.100" fill="none"/>
<path d="M127.9 681.9 l3.400 3.4 l3.400 -3.4" stroke="#9a9a9a" stroke-width="1.100" fill="none"/>
<line x1="1" y1="189.4" x2="125" y2="189.4" stroke="#dcdcdc"/>
<text x="5.6" y="199.9" textLength="83.3" lengthAdjust="spacingAndGlyphs" fill="#2b2b2b" font-weight="bold">Sheet Metal Gauges</text>
<path d="M111.3 198.5 l3.400 -3.4 l3.400 3.4" stroke="#555" stroke-width="1.100" fill="none"/>
<rect x="8.5" y="217.6" width="9.600" height="9.400" fill="#e9edf2" stroke="#97a3af" stroke-width="1"/>
<text x="20.1" y="225.7" textLength="63.9" lengthAdjust="spacingAndGlyphs" fill="#858585">Use gauge table</text>
<line x1="1" y1="238.2" x2="125" y2="238.2" stroke="#dcdcdc"/>
<text x="5.6" y="248.0" textLength="95.8" lengthAdjust="spacingAndGlyphs" fill="#2b2b2b" font-weight="bold">Sheet Metal Paramet...</text>
<path d="M111.3 247.3 l3.400 -3.4 l3.400 3.4" stroke="#555" stroke-width="1.100" fill="none"/>
<g transform="translate(14.6 270.8)" stroke="#35586a" stroke-width="0.900" stroke-linejoin="round"><path d="M-6 -3.500 L0.500 -6.500 L5.500 -4 L-2 -1.500z" fill="#eef6fb"/><path d="M-6 -3.500 L-2 -1.500 V6.500 L-6 3z" fill="#d4e8f3"/><path d="M-2 -1.500 L5.500 -4 V3 L-2 6.500z" fill="#3f8fb8"/></g>
<rect x="29.600" y="260.400" width="92" height="18.200" fill="#fff" stroke="#c3c3c3"/>
<rect x="30" y="261" width="9" height="17" fill="#4a9cf0"/>
<text x="40.6" y="271.6" textLength="33.0" lengthAdjust="spacingAndGlyphs" fill="#222">Face&lt;2&gt;</text>
<rect x="26.300" y="290.300" width="81.200" height="16" fill="#fff" stroke="#c6c6c6"/>
<text x="28.7" y="300.9" textLength="31.3" lengthAdjust="spacingAndGlyphs" fill="#222">2.00mm</text>
<rect x="110" y="291.0" width="10" height="6.7" fill="#ccd5f4"/>
<rect x="110" y="299.3" width="10" height="6.7" fill="#ccd5f4"/>
<path d="M112.200 295.8 l2.800 -2.400 l2.800 2.400" stroke="#3f5fc8" stroke-width="1.100" fill="none"/>
<path d="M112.200 301.2 l2.800 2.400 l2.800 -2.400" stroke="#3f5fc8" stroke-width="1.100" fill="none"/>
<g transform="translate(14.7 298)" fill="none" stroke="#2c3a40" stroke-width="1.100"><path d="M-5.500 0 l4.500 -4.500 l2 2 M-5.500 0 l3.500 3.500 M-1 -4.500 l5 3"/><path d="M-5.500 0 l2.800 -0.600 M-5.500 0 l0.600 -2.800" stroke-width="0.900"/><text x="0.500" y="5.500" font-size="5.500" font-weight="bold" fill="#2c3a40" stroke="none">T1</text></g>
<rect x="26.5" y="317.6" width="9.600" height="9.400" fill="#e9edf2" stroke="#97a3af" stroke-width="1"/>
<text x="38.0" y="325.8" textLength="68.7" lengthAdjust="spacingAndGlyphs" fill="#858585">Reverse thickness</text>
<rect x="26.5" y="333.4" width="9.600" height="9.400" fill="#e9edf2" stroke="#97a3af" stroke-width="1"/>
<text x="38.0" y="341.7" textLength="42.0" lengthAdjust="spacingAndGlyphs" fill="#858585">Keep body</text>
<rect x="26.300" y="353.300" width="81.200" height="16.200" fill="#fff" stroke="#c6c6c6"/>
<text x="28.7" y="363.4" textLength="31.3" lengthAdjust="spacingAndGlyphs" fill="#222">1.00mm</text>
<rect x="110" y="354.0" width="10" height="6.7" fill="#ccd5f4"/>
<rect x="110" y="362.3" width="10" height="6.7" fill="#ccd5f4"/>
<path d="M112.200 358.8 l2.800 -2.400 l2.800 2.400" stroke="#3f5fc8" stroke-width="1.100" fill="none"/>
<path d="M112.200 364.2 l2.800 2.400 l2.800 -2.400" stroke="#3f5fc8" stroke-width="1.100" fill="none"/>
<g transform="translate(14.7 360.800)" fill="none"><path d="M-6.500 5.500 q0.500 -9 10 -11" stroke="#3a7a88" stroke-width="1.200"/><path d="M5.500 5.500 l-7 -6.500 M-1.500 -1 v4.200 M-1.500 -1 h4.200" stroke="#222" stroke-width="1.300"/></g>
<line x1="1" y1="384.2" x2="125" y2="384.2" stroke="#dcdcdc"/>
<text x="5.6" y="394.2" textLength="48.6" lengthAdjust="spacingAndGlyphs" fill="#2b2b2b" font-weight="bold">Bend Edges</text>
<path d="M111.3 393.0 l3.400 -3.4 l3.400 3.4" stroke="#555" stroke-width="1.100" fill="none"/>
<g transform="translate(14.0 413.8)" stroke="#565656" stroke-width="0.900" stroke-linejoin="round"><path d="M-6 -3.500 L0.500 -6.500 L5.500 -4 L-2 -1.500z" fill="#f4f6f7"/><path d="M-6 -3.500 L-2 -1.500 V6.500 L-6 3z" fill="#a9c6d2"/><path d="M-2 -1.500 L5.500 -4 V3 L-2 6.500z" fill="#fbfcfd"/><path d="M-2 -1.500 V6.500" stroke="#2f4a58" stroke-width="1.600"/></g>
<rect x="29.600" y="402.100" width="91.300" height="73.900" fill="#cce4f7" stroke="#9ccaf0"/>
<rect x="30" y="402.600" width="8.600" height="73" fill="#ff69c4"/>
<text x="40.3" y="412.9" textLength="35.6" lengthAdjust="spacingAndGlyphs" fill="#1a1a1a">Edge&lt;1&gt;</text>
<text x="40.3" y="424.8" textLength="35.6" lengthAdjust="spacingAndGlyphs" fill="#1a1a1a">Edge&lt;2&gt;</text>
<text x="40.3" y="436.7" textLength="35.6" lengthAdjust="spacingAndGlyphs" fill="#1a1a1a">Edge&lt;3&gt;</text>
<text x="40.3" y="448.6" textLength="35.6" lengthAdjust="spacingAndGlyphs" fill="#1a1a1a">Edge&lt;4&gt;</text>
<text x="40.3" y="460.5" textLength="35.6" lengthAdjust="spacingAndGlyphs" fill="#1a1a1a">Edge&lt;5&gt;</text>
<text x="40.3" y="472.4" textLength="35.6" lengthAdjust="spacingAndGlyphs" fill="#1a1a1a">Edge&lt;6&gt;</text>
<rect x="107" y="403" width="13.300" height="72.300" fill="#eef3f8"/>
<rect x="107" y="416" width="13" height="34.300" fill="#c5c5c5"/>
<path d="M110.2 411.7 l3.400 -3.4 l3.400 3.4" stroke="#666" stroke-width="1.100" fill="none"/>
<path d="M110.2 466.8 l3.400 3.4 l3.400 -3.4" stroke="#666" stroke-width="1.100" fill="none"/>
<rect x="30.500" y="480.800" width="72" height="17.300" rx="2.500" fill="#fbfbfb" stroke="#4a4a4a" stroke-width="1"/>
<text x="33.8" y="492.6" textLength="65.2" lengthAdjust="spacingAndGlyphs" fill="#222">Collect All Bends</text>
<rect x="26.4" y="509.7" width="9.600" height="9.400" fill="#f4f8f6" stroke="#5d7f8c" stroke-width="1"/>
<path d="M28.1 514.5 l2.300 2.400 l3.800 -4.600" stroke="#1f9a3a" stroke-width="1.500" fill="none"/>
<text x="38.0" y="517.8" textLength="53.9" lengthAdjust="spacingAndGlyphs" fill="#666">Show callouts</text>
<line x1="1" y1="530.4" x2="125" y2="530.4" stroke="#dcdcdc"/>
<text x="5.6" y="540.0" textLength="98.1" lengthAdjust="spacingAndGlyphs" fill="#2b2b2b" font-weight="bold">Rip Edges found (Rea...</text>
<path d="M111.3 539.4 l3.400 -3.4 l3.400 3.4" stroke="#555" stroke-width="1.100" fill="none"/>
<g transform="translate(14.0 559.7)" stroke="#565656" stroke-width="0.900" stroke-linejoin="round"><path d="M-6 -3.500 L0.500 -6.500 L5.500 -4 L-2 -1.500z" fill="#f4f6f7"/><path d="M-6 -3.500 L-2 -1.500 V6.500 L-6 3z" fill="#a9c6d2"/><path d="M-2 -1.500 L5.500 -4 V3 L-2 6.500z" fill="#fbfcfd"/><path d="M-2 -1.500 V6.500" stroke="#2f4a58" stroke-width="1.600"/></g>
<rect x="29.300" y="548" width="92" height="75" fill="#fff" stroke="#c9c9c9"/>
<rect x="29.800" y="548.500" width="9" height="74" fill="#7b10f5"/>
<text x="40.0" y="559.0" textLength="67.0" lengthAdjust="spacingAndGlyphs" fill="#1a1a1a">Smart Selection&lt;</text>
<text x="40.0" y="570.8" textLength="67.0" lengthAdjust="spacingAndGlyphs" fill="#1a1a1a">Smart Selection&lt;</text>
<text x="40.0" y="582.9" textLength="67.0" lengthAdjust="spacingAndGlyphs" fill="#1a1a1a">Smart Selection&lt;</text>
<text x="40.0" y="594.8" textLength="67.0" lengthAdjust="spacingAndGlyphs" fill="#1a1a1a">Smart Selection&lt;</text>
<text x="40.0" y="606.7" textLength="67.0" lengthAdjust="spacingAndGlyphs" fill="#1a1a1a">Smart Selection&lt;</text>
<text x="40.0" y="618.6" textLength="67.0" lengthAdjust="spacingAndGlyphs" fill="#1a1a1a">Smart Selection&lt;</text>
<rect x="107.500" y="549" width="13.300" height="73" fill="#f4f4f4"/>
<rect x="107.500" y="563" width="12.800" height="33.800" fill="#c5c5c5"/>
<path d="M110.6 558.2 l3.400 -3.4 l3.400 3.4" stroke="#888" stroke-width="1.100" fill="none"/>
<path d="M110.6 613.8 l3.400 3.4 l3.400 -3.4" stroke="#888" stroke-width="1.100" fill="none"/>
<rect x="26.6" y="633.8" width="9.600" height="9.400" fill="#f4f8f6" stroke="#5d7f8c" stroke-width="1"/>
<path d="M28.3 638.6 l2.300 2.400 l3.800 -4.600" stroke="#1f9a3a" stroke-width="1.500" fill="none"/>
<text x="37.9" y="641.5" textLength="54.1" lengthAdjust="spacingAndGlyphs" fill="#666">Show callouts</text>
<line x1="1" y1="653.6" x2="125" y2="653.6" stroke="#dcdcdc"/>
<text x="5.6" y="663.1" textLength="52.9" lengthAdjust="spacingAndGlyphs" fill="#2b2b2b" font-weight="bold">Rip Sketches</text>
<path d="M111.3 662.7 l3.400 -3.4 l3.400 3.4" stroke="#555" stroke-width="1.100" fill="none"/>
<rect x="29.300" y="671.200" width="92" height="21" fill="#fff" stroke="#c9c9c9"/>
<rect x="29.800" y="672" width="9" height="17.700" fill="#22cc3a"/>
<path d="M19 677.500 h-8.500 q-1.500 0 -1.500 1.500 v9 q0 1.500 1.500 1.500 h8.500" stroke="#2f6c91" stroke-width="1.300" fill="none"/>
</svg>
<!--/LEFT-->
<!--HUD-->
<svg width="1280" height="720" viewBox="0 0 1280 720" font-family="Liberation Sans, sans-serif">
<!-- flyout tree -->
<path d="M144.500 113.200 l4 3.100 l-4 3.100z" fill="#111"/>
<g transform="translate(164.500 116.500) scale(1.050)"><path d="M-6 -3 l3 -3.500 h4 l1 2 l3 0.500 l1.500 3 l-0.500 4 l-3 3 l-5 -2 l-4 -3 z" fill="#f2c81e" stroke="#c79a10" stroke-width="0.900"/><path d="M-3 -3 l4 0 l0.500 3 l3 1 M1.500 0 l-1 4" fill="none" stroke="#b8860b" stroke-width="0.900"/><path d="M-5 -2.500 l2.500 -3 h3" stroke="#fbe88a" stroke-width="1" fill="none"/></g>
<text x="174.900" y="121.400" font-size="8.800" fill="#444" textLength="59.300" lengthAdjust="spacingAndGlyphs">Sheet Metal P...</text>
<!-- splitter handle -->
<rect x="139.500" y="377.500" width="7" height="28" fill="#f6f6f6" stroke="#d6d6d6" stroke-width="0.800"/>
<circle cx="142.600" cy="391.300" r="1.700" fill="#e4e4e4" stroke="#b8b8b8" stroke-width="0.600"/>
<!-- HUD -->
<g>
<g transform="translate(606.200 100.200)"><circle cx="1.500" cy="-2" r="4.200" fill="#f4f4f4" stroke="#555" stroke-width="0.900"/><circle cx="1.500" cy="-2" r="1.800" fill="none" stroke="#777" stroke-width="0.700"/><path d="M-1.500 1.200 l-4 4.300" stroke="#666" stroke-width="1.800"/></g>
<g transform="translate(624.400 99.800)"><rect x="-2.800" y="-6" width="9" height="8" fill="none" stroke="#666" stroke-width="0.700" stroke-dasharray="1.200 1"/><circle cx="1.200" cy="-1.800" r="4" fill="#f4f4f4" stroke="#666" stroke-width="0.900"/><path d="M-1.700 1.400 l-4 4.300" stroke="#777" stroke-width="1.800"/></g>
<g transform="translate(643.500 99.800)"><path d="M-6 4 l8.500 -8.500 l3 2.500 l-8.500 8.500 z" fill="#cfe0ea" stroke="#8a98a4" stroke-width="0.800"/><path d="M-3 -5 h5 M0 -6.500 l2.200 1.500 l-2.200 1.500" stroke="#444" stroke-width="0.900" fill="none"/><path d="M-4 3 l5 2.500" stroke="#5a9cc4" stroke-width="2"/></g>
<g transform="translate(662.400 100.600)" fill="#e4e4e4" stroke="#d6d6d6" stroke-width="0.700"><path d="M-5.500 -3 l4 -1.500 v8 l-4 1.500z"/><path d="M-1 -4 l6 -1 v8 l-6 1z"/></g>
<g transform="translate(681.300 100.200)"><rect x="-6" y="-3" width="9" height="9" fill="#7fb4dc" stroke="#4a86b4" stroke-width="0.800"/><path d="M-1.500 -6.500 h8 v8" fill="none" stroke="#666" stroke-width="0.800"/><path d="M0 -6 v4 M-1.500 -3.500 l1.500 1.800 l1.500 -1.800 M6.500 -6.500 l-3.500 3.500 M6 -0.500 h-3 " stroke="#333" stroke-width="0.900" fill="none"/></g>
<path d="M692 99.200 h3.600 l-1.800 2.200z" fill="#aaa"/>
<g transform="translate(707.500 100)"><path d="M-5.500 -4 l4 1.500 v8.500 l-4 -2z" fill="#5a9cc8" stroke="#3a7cab" stroke-width="0.700"/><path d="M-1.500 -2.500 l6.500 -1.500 v8 l-6.500 2z" fill="#dfeef8" stroke="#7a98ac" stroke-width="0.700"/><path d="M-5.500 -4 l6.500 -1.500 l4 1.500 l-6.500 1.500z" fill="#b8d8ee" stroke="#7a98ac" stroke-width="0.700"/><path d="M1.500 -3 v8.500" stroke="#9ab8cc" stroke-width="0.700"/></g>
<path d="M718.600 99.200 h3.600 l-1.800 2.200z" fill="#aaa"/>
<g transform="translate(733.300 99.500)"><path d="M-6 0.500 q6 -6.500 12 0 q-6 5.500 -12 0z" fill="#f4f4f4" stroke="#666" stroke-width="0.800"/><circle cx="0.500" cy="0" r="2.800" fill="#444"/><circle cx="-0.300" cy="-0.800" r="0.900" fill="#bbb"/></g>
<path d="M745 99.200 h3.600 l-1.800 2.200z" fill="#aaa"/>
<g transform="translate(762 97.500)" opacity="0.550"><circle r="4.300" fill="#e0e0e0" stroke="#c8c8c8" stroke-width="0.600"/></g>
<g transform="translate(782 97.500)" opacity="0.550"><path d="M-5 3 l4 -7 l3 4 l2 -2 l3 5z" fill="#dcdcdc" stroke="#c8c8c8" stroke-width="0.600"/></g>
<path d="M789.500 99.200 h3.600 l-1.800 2.200z" fill="#bbb"/>
<line x1="796.500" y1="94" x2="796.500" y2="107" stroke="#555" stroke-width="0.800" opacity="0"/>
<g transform="translate(804.600 99.800)"><rect x="-6" y="-5.500" width="12" height="8.500" fill="#c9c9c9" stroke="#7a7a7a" stroke-width="1"/><rect x="-4.800" y="-4.300" width="9.600" height="6.100" fill="#e2e2e2"/><path d="M0 3 v2.500 M-3 5.800 h6" stroke="#555" stroke-width="1.100"/></g>
<path d="M815.600 99.200 h3.600 l-1.800 2.200z" fill="#aaa"/>
</g>
<!-- window controls in viewport -->
<g fill="none" stroke="#a0a0a0" stroke-width="0.900">
<rect x="1186" y="95.500" width="8" height="10"/><path d="M1186 99 h2.200 v3 h-2.200" />
<rect x="1205.500" y="95.500" width="8" height="10"/><path d="M1213.500 99 h-2.200 v3 h2.200"/>
<path d="M1224.500 103.700 h7.500" stroke-width="1.100"/>
<rect x="1243" y="98.500" width="7" height="5.500"/><path d="M1245.500 98.500 v-2 h7 v5.500 h-2.500"/>
<path d="M1262.500 96.500 l7.500 7.500 M1270 96.500 l-7.500 7.500"/>
</g>
<!-- confirmation corner -->
<path d="M1202.500 124 l5.500 5.500 l12.500 -11.500" stroke="#d6e6d0" stroke-width="4" fill="none"/>
<path d="M1236.500 139 l15 15 M1251.500 139 l-15 15" stroke="#f5d5d7" stroke-width="4" fill="none"/>
<!-- triad -->
<g>
<path d="M170 654 L178.500 647.200" stroke="#1d6b2c" stroke-width="3.500"/><path d="M174 646.500 l5.800 -0.800 l-1.800 5z" fill="#1d6b2c"/>
<path d="M170.100 654.500 V640" stroke="#2a1fc8" stroke-width="3"/><path d="M166.600 640.500 h7 l-3.500 -7z" fill="#2a1fc8"/>
<path d="M169 654.800 L184 657" stroke="#c8181e" stroke-width="2.600"/><path d="M183.200 653.500 l6 4.300 l-7 2.800z" fill="#d43a3e"/>
<path d="M168 627 h4 l-4 4.500 h4" stroke="#3a34c0" stroke-width="0.800" fill="none"/>
<path d="M178.500 642.500 l2 2.200 l2 -2.200 M180.500 644.700 l-1.500 2.500" stroke="#4a8a54" stroke-width="0.800" fill="none"/>
<path d="M190.500 655.500 l4.500 5 M195 655.500 l-4.500 5" stroke="#c8383c" stroke-width="0.800" fill="none"/>
</g>
<!-- cursor -->
<path d="M312.500 263.500 v10.500 l2.600 -2.400 l1.800 4 l1.500 -0.700 l-1.800 -3.900 h3.600z" fill="#fff" stroke="#333" stroke-width="0.800"/>
</svg>

<!--/HUD-->
<!--RIGHT-->
<svg width="1280" height="720" viewBox="0 0 1280 720" font-family="Liberation Sans, sans-serif">
<rect x="1259.500" y="128" width="20" height="126" fill="#d3d3d3" stroke="#b6b6b6" stroke-width="0.800"/>
<rect x="1260" y="128.500" width="19.500" height="17" fill="#fff"/>
<g stroke="#b6b6b6" stroke-width="0.800"><path d="M1259.500 146 h20 M1259.500 164 h20 M1259.500 182 h20 M1259.500 200 h20 M1259.500 218 h20 M1259.500 236 h20"/></g>
<g transform="translate(1269.500 137)"><path d="M-6.500 0 l6.500 -6 l6.500 6" stroke="#2f5f8a" stroke-width="1.500" fill="none"/><path d="M-4.500 -0.500 v6.500 h9 v-6.500" stroke="#444" stroke-width="1" fill="#fff"/><rect x="-1" y="2" width="2.600" height="4" fill="none" stroke="#444" stroke-width="0.800"/></g>
<g transform="translate(1269.500 155)" fill="#f4f4f4" stroke="#555" stroke-width="0.800"><path d="M-5.500 -4.500 l2.500 -1.500 l2.500 1.500 v10 l-2.500 1 l-2.500 -1z"/><path d="M-0.500 -4.500 l2.500 -1.500 l2.500 1.500 v10 l-2.500 1 l-2.500 -1z"/><path d="M4.500 -4 l1.500 1 v8 l-1.500 1"/></g>
<g transform="translate(1269.500 173)" stroke="#555" stroke-width="0.800"><path d="M-6 5 v-9.500 h4 l1 1.500 h5.500 v2" fill="#e8e8e8"/><path d="M-6 5 l2.500 -6 h10 l-2.500 6z" fill="#fafafa"/></g>
<g transform="translate(1269.500 191)"><rect x="-6.500" y="-6" width="13" height="12" fill="#f5d33a" stroke="#8a7a20" stroke-width="0.800"/><rect x="-5" y="-4.500" width="4.500" height="3.500" fill="#fff" stroke="#8a7a20" stroke-width="0.500"/><rect x="1" y="-4.500" width="4.500" height="3.500" fill="#fff" stroke="#8a7a20" stroke-width="0.500"/><path d="M-4.500 4 l2 -3 l2 3z" fill="#fff" stroke="#8a7a20" stroke-width="0.500"/><rect x="1.500" y="1" width="5" height="5" fill="#fff" stroke="#555" stroke-width="0.600"/><rect x="1.500" y="1" width="5" height="1.500" fill="#666"/></g>
<g transform="translate(1269.500 209)"><circle r="6.300" fill="#3b6fd0"/><path d="M0 0 L-6.300 0.500 A6.300 6.300 0 0 0 2 6z" fill="#35a835"/><path d="M0 0 L2 6 A6.300 6.300 0 0 0 6.200 -1z" fill="#e8a23a"/><path d="M0 0 L6.200 -1 A6.300 6.300 0 0 0 0.500 -6.300z" fill="#d43030"/><ellipse cx="-2" cy="-2.800" rx="2.800" ry="2" fill="#bcd4ff" opacity="0.800"/></g>
<g transform="translate(1269.500 227)"><rect x="-6.500" y="-5.800" width="13" height="11.800" fill="#fff" stroke="#2f6c91" stroke-width="1"/><rect x="-6.500" y="-5.800" width="13" height="2.300" fill="#2f6c91"/><g fill="#2f6c91"><rect x="-4.800" y="-2" width="2.200" height="1.800"/><rect x="-4.800" y="0.800" width="2.200" height="1.800"/><rect x="-4.800" y="3.400" width="2.200" height="1.600"/></g><path d="M-1.500 -1.100 h6.500 M-1.500 1.700 h6.500 M-1.500 4.200 h6.500" stroke="#555" stroke-width="0.900"/></g>
<g transform="translate(1269.500 245)" fill="#f4f4f4" stroke="#3a5a78" stroke-width="0.800"><path d="M-5 -3.500 h6 v4 h-3.500 l-1.500 1.500 v-1.500 h-1z"/><path d="M-1 -1 h6 v4 h-1 v1.500 l-1.500 -1.500 h-3.500z" fill="#dfe8f0"/></g>
<line x1="1279.500" y1="0" x2="1279.500" y2="720" stroke="#4a5a55" stroke-width="1" opacity="0.600"/>
</svg>

<!--/RIGHT-->
<!--BOTTOM-->
<svg width="1280" height="720" viewBox="0 0 1280 720" font-family="Liberation Sans, sans-serif">
<rect x="0" y="693.500" width="49.600" height="12.500" fill="#9a9ab2"/>
<g fill="#b6b6ca"><path d="M4 696 v7 M10.500 696 l-4.500 3.500 l4.500 3.500z"/><path d="M22 696 l-4.500 3.500 l4.500 3.500z"/><path d="M27.500 696 l4.500 3.500 l-4.500 3.500z"/><path d="M39 696 l4.500 3.500 l-4.500 3.500z"/></g>
<g stroke="#b6b6ca" stroke-width="1.200"><path d="M4.500 696 v7 M45.500 696 v7"/></g>
<g stroke="#8e8ea6" stroke-width="0.800"><path d="M12.500 693.500 v12.500 M24.800 693.500 v12.500 M37.200 693.500 v12.500"/></g>
<rect x="49.600" y="693.500" width="43.800" height="13" fill="#fff"/>
<text x="59" y="703.300" font-size="9" font-weight="bold" fill="#111" textLength="28.500" lengthAdjust="spacingAndGlyphs">Model</text>
<rect x="93.400" y="693.500" width="86" height="12.500" fill="#d2d2d2"/>
<path d="M93.400 693.500 v12.500 M179.400 693.500 v12.500" stroke="#b4b4b4"/>
<text x="102.400" y="703.300" font-size="9" fill="#222" textLength="63.500" lengthAdjust="spacingAndGlyphs">Motion Study 1</text>
<path d="M0 693.500 H1280" stroke="#b4b4b4"/>
<path d="M0 706.500 H1280" stroke="#bdbdbd"/>
<text x="1.400" y="716.800" font-size="9" fill="#222" textLength="58.800" lengthAdjust="spacingAndGlyphs">Select an entity</text>
<text x="1172.700" y="717.300" font-size="8.500" fill="#b2b2b2" textLength="26.300" lengthAdjust="spacingAndGlyphs">MMGS</text>
<path d="M1211.500 713.300 h3.200" stroke="#777" stroke-width="1"/>
<g stroke="#e0e0e0" stroke-width="0.800"><path d="M1136 708 v11 M1140 708 v11 M1145 708 v11 M1152 708 v11"/></g>
<g transform="translate(1256 713)" fill="#f4f4f4" stroke="#555" stroke-width="0.900"><path d="M-6 -3.500 l3.500 -3 l8.500 4.500 l-3.500 6.500 l-8.500 -4.500z"/><circle cx="-3.500" cy="-3" r="0.900"/><path d="M-1 -1.500 l4.500 2.300 M-2 0.500 l4.500 2.300" stroke-width="0.700"/></g>
<path d="M1272 718 h2 M1275 718 h2 M1275 715 h2" stroke="#9a9a9a" stroke-width="1"/>
<path d="M0 719.500 H1280" stroke="#b4b4b4"/>
<path d="M0.500 29 V720" stroke="#c2c2c2"/>
</svg>

<!--/BOTTOM-->
</body></html>
